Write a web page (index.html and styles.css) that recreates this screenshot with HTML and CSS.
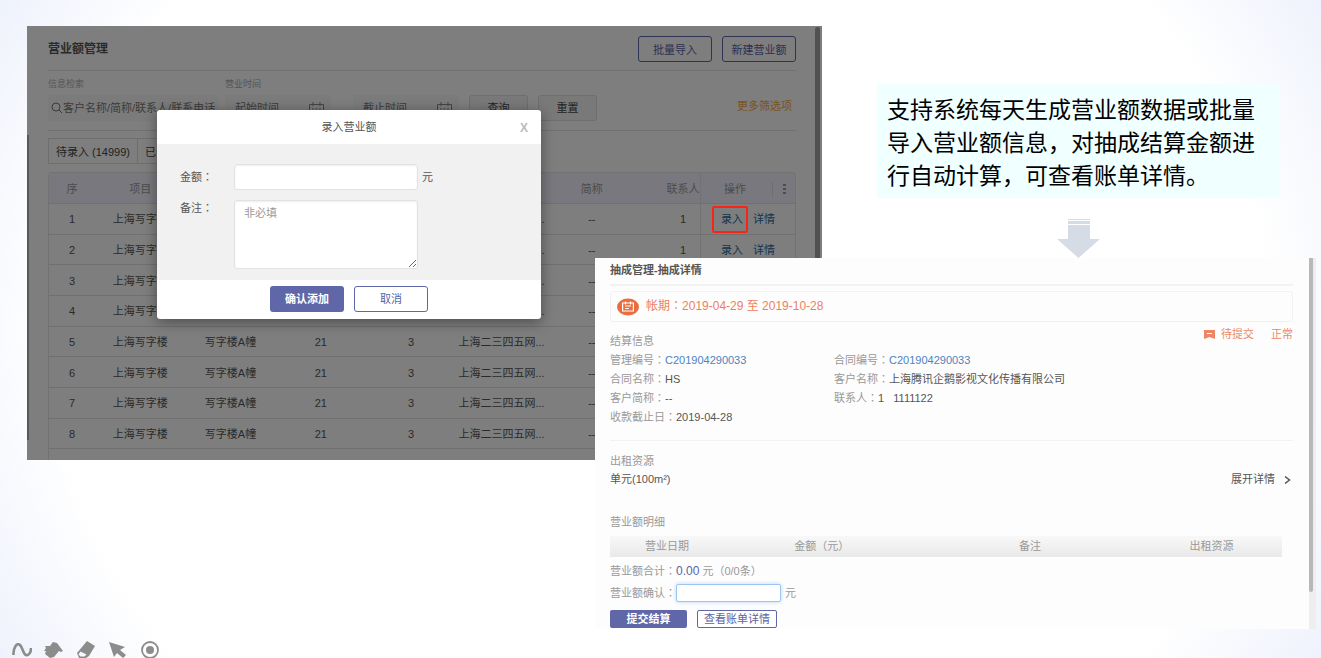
FILE: index.html
```html
<!DOCTYPE html>
<html lang="zh-CN">
<head>
<meta charset="utf-8">
<title>营业额管理</title>
<link rel="stylesheet" href="styles.css">
</head>
<body>
<main class="slide">
  <section class="list">
    <header class="list-head">
      <h1>营业额管理</h1>
      <div class="head-buttons">
        <button class="btn outline">批量导入</button>
        <button class="btn outline">新建营业额</button>
      </div>
    </header>
    <div class="filters">
      <div class="field">
        <label for="kw">信息检索</label>
        <div class="search">
          <svg width="12" height="12" viewBox="0 0 12 12"><circle cx="5" cy="5" r="4" fill="none" stroke="#777"/><path d="M8 8l3 3" stroke="#777"/></svg>
          <input id="kw" type="text" placeholder="客户名称/简称/联系人/联系电话">
        </div>
      </div>
      <div class="field dates">
        <label for="from">营业时间</label>
        <div class="date-row">
          <div class="date"><input id="from" type="text" placeholder="起始时间"><svg width="15" height="12" viewBox="0 0 15 12" fill="none" stroke="#888"><path d="M.5 2.500h14v9H.5zM4 0v4M11 0v4M3 7h2M6.500 7h2M10 7h2"/></svg></div>
          <div class="date"><input type="text" placeholder="截止时间" aria-label="截止时间"><svg width="15" height="12" viewBox="0 0 15 12" fill="none" stroke="#888"><path d="M.5 2.500h14v9H.5zM4 0v4M11 0v4M3 7h2M6.500 7h2M10 7h2"/></svg></div>
        </div>
      </div>
      <button class="btn soft">查询</button>
      <button class="btn soft">重置</button>
      <a class="more" href="#">更多筛选项</a>
    </div>
    <div class="tabs"><button>待录入 (14999)</button><button>已录入</button></div>
    <table class="grid">
      <colgroup><col class="c-no"><col class="c-mid"><col class="c-mid"><col class="c-mid"><col class="c-mid"><col class="c-mid"><col class="c-mid"><col class="c-person"><col class="c-op"></colgroup>
      <thead><tr><th>序</th><th>项目</th><th></th><th></th><th></th><th></th><th>简称</th><th class="person">联系人</th><th class="op"><span class="op-head"><span>操作</span><span class="dots"><svg width="3" height="11" viewBox="0 0 3 11" fill="#999"><path d="M0 0h3v2H0zM0 4h3v2H0zM0 8h3v2H0z"/></svg></span></span></th></tr></thead>
      <tbody>
        <tr><td>1</td><td>上海写字楼</td><td>写字楼A幢</td><td>21</td><td>3</td><td>上海二三四五网...</td><td>--</td><td class="person">1</td><td class="op"><a href="#">录入</a><a href="#">详情</a></td></tr>
        <tr><td>2</td><td>上海写字楼</td><td>写字楼A幢</td><td>21</td><td>3</td><td>上海二三四五网...</td><td>--</td><td class="person">1</td><td class="op"><a href="#">录入</a><a href="#">详情</a></td></tr>
        <tr><td>3</td><td>上海写字楼</td><td>写字楼A幢</td><td>21</td><td>3</td><td>上海二三四五网...</td><td>--</td><td class="person"></td><td class="op"></td></tr>
        <tr><td>4</td><td>上海写字楼</td><td></td><td></td><td></td><td>上海二三四五网...</td><td>--</td><td class="person"></td><td class="op"></td></tr>
        <tr><td>5</td><td>上海写字楼</td><td>写字楼A幢</td><td>21</td><td>3</td><td>上海二三四五网...</td><td>--</td><td class="person"></td><td class="op"></td></tr>
        <tr><td>6</td><td>上海写字楼</td><td>写字楼A幢</td><td>21</td><td>3</td><td>上海二三四五网...</td><td>--</td><td class="person"></td><td class="op"></td></tr>
        <tr><td>7</td><td>上海写字楼</td><td>写字楼A幢</td><td>21</td><td>3</td><td>上海二三四五网...</td><td>--</td><td class="person"></td><td class="op"></td></tr>
        <tr><td>8</td><td>上海写字楼</td><td>写字楼A幢</td><td>21</td><td>3</td><td>上海二三四五网...</td><td>--</td><td class="person"></td><td class="op"></td></tr>
        <tr><td>&nbsp;</td><td></td><td></td><td></td><td></td><td></td><td></td><td class="person"></td><td class="op"></td></tr>
      </tbody>
    </table>
    <div class="list-scroll"></div>
    <div class="list-edge"></div>
    <div class="mask"></div>
    <div class="highlight"></div>
    <form class="modal" role="dialog" aria-labelledby="modal-title">
      <header class="modal-head"><h2 id="modal-title">录入营业额</h2><button type="button" class="close" aria-label="关闭">X</button></header>
      <div class="modal-body">
        <label for="amount">金额<span class="p" lang="zh-TW">：</span></label>
        <div class="amount"><input id="amount" type="text"><span>元</span></div>
        <label for="memo">备注<span class="p" lang="zh-TW">：</span></label>
        <textarea id="memo" placeholder="非必填"></textarea>
      </div>
      <footer class="modal-foot">
        <button type="button" class="btn primary">确认添加</button>
        <button type="button" class="btn outline">取消</button>
      </footer>
    </form>
  </section>

  <aside class="aside">
    <p class="note">支持系统每天生成营业额数据或批量导入营业额信息，对抽成结算金额进行自动计算，可查看账单详情。</p>
    <svg class="arrow" width="43" height="39" viewBox="0 0 43 39" fill="#d6dce5"><path d="M11 0h22v1H11zM11 2h22v3H11zM11 6h22v14h10L21.500 39 0 20h11z"/></svg>
  </aside>

  <section class="detail">
    <div class="detail-main">
      <h2>抽成管理-抽成详情</h2>
      <div class="period">
        <svg width="22" height="18" viewBox="0 0 22 18"><ellipse cx="11" cy="9" rx="11" ry="8.500" fill="#ea6d3d"/><g fill="none" stroke="#fff" stroke-width="1.200"><path d="M5.600 5h10.800v8H5.600zM8.500 3.500v3M13.500 3.500v3M8 8h6M8 10.500h4"/></g></svg>
        <span>帐期<span class="p" lang="zh-TW">：</span>2019-04-29 至 2019-10-28</span>
      </div>
      <div class="settle">
        <h3>结算信息</h3>
        <div class="status"><svg width="11" height="9" viewBox="0 0 11 9"><path d="M0 0h11v9L5.500 7 0 9z" fill="#ee8564"/><path d="M3 3.500h5" stroke="#fff"/></svg><span>待提交</span><span class="normal">正常</span></div>
      </div>
      <div class="info">
        <div>管理编号<span class="p" lang="zh-TW">：</span><a href="#">C201904290033</a></div>
        <div>合同编号<span class="p" lang="zh-TW">：</span><a href="#">C201904290033</a></div>
        <div>合同名称<span class="p" lang="zh-TW">：</span><b>HS</b></div>
        <div>客户名称<span class="p" lang="zh-TW">：</span><b>上海腾讯企鹅影视文化传播有限公司</b></div>
        <div>客户简称<span class="p" lang="zh-TW">：</span><b>--</b></div>
        <div>联系人<span class="p" lang="zh-TW">：</span><b>1 &nbsp; 1111122</b></div>
        <div>收款截止日<span class="p" lang="zh-TW">：</span><b>2019-04-28</b></div>
      </div>
      <h3 class="rent">出租资源</h3>
      <div class="unit"><span>单元(100m²)</span><a href="#">展开详情<svg width="7" height="8" viewBox="0 0 7 8"><path d="M1 .5l4.500 3.500L1 7.500" fill="none" stroke="#555" stroke-width="1.500"/></svg></a></div>
      <h3 class="lines">营业额明细</h3>
      <table class="bills"><colgroup><col class="b1"><col class="b2"><col class="b3"><col class="b4"></colgroup>
        <thead><tr><th>营业日期</th><th>金额<span class="p" lang="zh-TW">（</span>元<span class="p" lang="zh-TW">）</span></th><th>备注</th><th>出租资源</th></tr></thead></table>
      <div class="sum">营业额合计<span class="p" lang="zh-TW">：</span><strong>0.00</strong> 元<span class="p" lang="zh-TW">（</span>0/0条<span class="p" lang="zh-TW">）</span></div>
      <div class="confirm"><label for="sure">营业额确认<span class="p" lang="zh-TW">：</span></label><input id="sure" type="text"><span>元</span></div>
      <div class="actions"><button class="btn small primary">提交结算</button><button class="btn small outline">查看账单详情</button></div>
    </div>
    <div class="detail-scroll"><div class="thumb"></div></div>
  </section>

  <nav class="tools" aria-label="放映工具">
    <svg viewBox="0 0 20 18"><path d="M1.500 14C1 7 5 1 8 4s3 9 6 10 5-3 5-7" fill="none" stroke="#8c8c8c" stroke-width="2.600"/></svg>
    <svg viewBox="0 0 20 18"><path d="M1 5l5 0 3-4 4 1 6 8-2 1-2-1-5 6-4 1-5-4 1-3-2 0 2-3z" fill="#8c8c8c"/></svg>
    <svg viewBox="0 0 20 18"><path d="M11 0l8 5-6 10-3 2H3l-2-5z" fill="#8c8c8c"/><path d="M4.500 10.500l6 3-2 2H4.500l-2-2z" fill="#f8faff"/></svg>
    <svg viewBox="0 0 20 18"><path d="M1 1l16 5-5 3 6 5-3 3-6-5-3 4z" fill="#8c8c8c"/></svg>
    <svg viewBox="0 0 20 18"><circle cx="10" cy="9" r="8" fill="none" stroke="#8c8c8c" stroke-width="1.800"/><circle cx="10" cy="9" r="4" fill="#8c8c8c"/></svg>
  </nav>
</main>
</body>
</html>
```

FILE: styles.css
```css
* { box-sizing: border-box; }
body, h1, h2, h3, p { margin: 0; }
body, button, input, textarea {
  font-family: "Liberation Sans", "Noto Sans CJK SC", sans-serif;
  font-size: 11px;
}
body { color: #555; line-height: 15px; }
a { color: inherit; text-decoration: none; }
button, input, textarea { margin: 0; padding: 0; border: 0; color: inherit; }
svg { display: block; flex: none; }
.p { font-family: "Liberation Sans", "Noto Sans CJK TC", sans-serif; }

.slide {
  display: grid;
  grid-template-columns: 27fr 568fr 227fr 55fr 403fr 29fr 12fr;
  grid-template-rows: minmax(0, 26fr) minmax(0, 232fr) minmax(0, 202fr) minmax(0, 169fr) minmax(0, 29fr);
  height: 100vh;
  overflow: hidden;
  background: radial-gradient(ellipse 62% 110% at 50% 50%, #fff 74%, #e8edfb 100%);
}

.btn { height: 26px; min-width: 74px; border-radius: 3px; line-height: 15px; }
.btn.outline { border: 1px solid #5f67a8; background: #fff; color: #5b63a3; }
.btn.primary { background: #5f67a8; color: #fff; font-weight: bold; }
.btn.soft { min-width: 59px; border: 1px solid #ddd; background: #f3f3f3; color: #444; }
.btn.small { height: 18px; border-radius: 2px; }

/* revenue list */
.list {
  grid-area: 2 / 2 / 4 / 4;
  position: relative;
  overflow: hidden;
  padding: 0 26px 0 21px;
  background: #fdfdfd;
}
.list-head {
  display: flex;
  justify-content: space-between;
  align-items: center;
  height: 45px;
  border-bottom: 1px solid #e2e2e2;
}
.list-head h1 { padding-top: 2px; font-size: 12px; }
.head-buttons { display: flex; gap: 10px; padding-top: 2px; }
.head-buttons .outline { background: transparent; }
.head-buttons .btn { padding-top: 2px; }
.filters {
  display: flex;
  align-items: flex-end;
  gap: 10px;
  height: 60px;
  padding-bottom: 9px;
  border-bottom: 1px solid #e2e2e2;
}
.field { width: 170px; }
.field.dates { width: 234px; margin-left: -3px; }
.field label { display: block; margin-bottom: 5px; font-size: 9px; line-height: 12px; color: #aaa; }
.search, .date { display: flex; align-items: center; height: 26px; background: #f6f6f6; }
.search { padding-left: 3px; }
.search input, .date input { flex: 1; width: 0; background: transparent; }
.search input::placeholder, .date input::placeholder { color: #777; }
.date-row { display: flex; gap: 22px; }
.date { flex: 1; padding: 0 7px 0 10px; }
.more { margin-left: auto; padding: 0 4px 7px 0; color: #f3a73c; }
.tabs { display: flex; height: 26px; margin: 7px 0 8px; }
.tabs button { padding: 0 7px; border: 1px solid #ddd; background: transparent; color: #444; }
.tabs button + button { margin-left: -1px; }

.grid {
  width: 100%;
  height: 309px;
  table-layout: fixed;
  border: 1px solid #e4e4e4;
  border-collapse: separate;
  border-spacing: 0;
  border-radius: 3px 3px 0 0;
}
.grid th, .grid td { padding: 2px 0 0; text-align: center; white-space: nowrap; border-bottom: 1px solid #e0e0e0; }
.grid th { height: 31px; background: #f0f0fc; color: #999; font-weight: normal; }
.c-no { width: 46px; }
.c-person { width: 63px; }
.c-op { width: 95px; }
.grid .person { padding-left: 29px; }
.grid .op { text-align: left; padding-left: 20px; border-left: 1px solid #e4e4e4; color: #286a9d; }
.grid th.op { color: #999; }
.grid .op a { margin-right: 10px; }
.op-head { display: flex; justify-content: space-between; padding-left: 3px; }
.dots { display: flex; align-items: center; justify-content: center; width: 23px; border-left: 1px solid #ddd; }
.list-scroll { position: absolute; top: 1px; right: 2px; bottom: 0; width: 5px; border-radius: 3px; background: #a3a3a3; }
.list-edge { position: absolute; left: 0; top: 109px; bottom: 20px; width: 2px; background: #b0b0b0; }
.mask { position: absolute; inset: 0; background: rgba(0, 0, 0, .5); }
.highlight { position: absolute; right: 74px; top: 180px; width: 36px; height: 27px; border: 2px solid #fa2416; border-radius: 2px; }

/* dialog */
.modal {
  position: absolute;
  left: 130px;
  top: 84px;
  width: 384px;
  border-radius: 3px;
  overflow: hidden;
  background: #fff;
  box-shadow: 0 3px 14px rgba(0, 0, 0, .4);
}
.modal-head { position: relative; padding: 10px 0 9px; text-align: center; }
.modal-head h2 { font-size: 11px; font-weight: normal; }
.close { position: absolute; top: 11px; right: 13px; background: none; color: #bbb; font-size: 12px; font-weight: bold; }
.modal-body {
  display: grid;
  grid-template-columns: 54px 1fr;
  row-gap: 10px;
  padding: 20px 23px 11px;
  background: #f1f1f1;
}
.modal-body > label { padding-top: 6px; }
.modal-body label[for="memo"] { padding-top: 1px; }
.amount { display: flex; align-items: center; gap: 4px; }
.amount input, .modal-body textarea { width: 184px; border: 1px solid #e2e2e2; border-radius: 3px; background: #fff; box-shadow: inset 0 1px 2px #eee; }
.amount input { height: 26px; }
.modal-body textarea { display: block; height: 69px; padding: 5px 9px; line-height: 15px; resize: both; }
.modal-body textarea::placeholder { color: #999; }
.modal-foot { display: flex; justify-content: center; gap: 10px; padding: 6px 0 7px; }

/* note */
.aside { grid-area: 1 / 5 / 3 / 6; display: flex; flex-direction: column; align-items: center; justify-content: flex-end; }
.note { padding: 10px 10px 5px; background: #f0ffff; color: #000; font-size: 23px; line-height: 33px; }
.arrow { margin-top: 21px; }

/* settlement detail */
.detail { grid-area: 3 / 3 / 5 / 8; z-index: 1; display: flex; margin-right: 5px; }
.detail-main { flex: 1; padding: 5px 16px 0 15px; background: #fdfdfe; color: #999; }
.detail-main h2 { padding-bottom: 6px; border-bottom: 2px solid #f2f2f2; font-size: 11px; color: #555; }
.period {
  display: flex;
  align-items: center;
  gap: 7px;
  height: 31px;
  margin-top: 5px;
  padding-left: 6px;
  border: 1px solid #f2f2f3;
  border-radius: 3px;
  color: #ee7f5c;
  font-size: 12px;
}
.detail-main h3 { font-size: 11px; font-weight: normal; color: #999; }
.settle { display: flex; justify-content: space-between; padding-top: 5px; }
.settle h3 { padding-top: 7px; }
.status { display: flex; align-items: center; gap: 6px; height: 15px; color: #ee8564; }
.normal { margin-left: 11px; }
.info {
  display: grid;
  grid-template-columns: 224px 1fr;
  line-height: 19px;
  padding: 2px 0 13px;
  border-bottom: 1px solid #f2f2f2;
}
.info a { color: #4b83bd; }
.info b { color: #555; font-weight: normal; }
.detail-main .rent { padding-top: 13px; }
.unit { display: flex; justify-content: space-between; padding: 3px 2px 0 0; color: #555; }
.unit a { display: flex; align-items: center; gap: 9px; }
.detail-main .lines { padding: 28px 0 6px; }
.bills { width: calc(100% - 11px); border-spacing: 0; table-layout: fixed; background: linear-gradient(#f8f8f8, #e9e9e9); }
.bills th { height: 21px; padding: 0; font-weight: normal; }
.b1 { width: 17%; }
.b2 { width: 29%; }
.b3 { width: 33%; }
.b4 { width: 21%; }
.sum { padding: 7px 0 5px; }
.sum strong { font-size: 12px; font-weight: normal; color: #5b63a3; }
.confirm { display: flex; align-items: center; }
.confirm input { width: 105px; height: 18px; margin-right: 4px; border: 1px solid #9cc4ee; border-radius: 2px; background: #fff; box-shadow: 0 0 4px #b9d9f5; }
.actions { display: flex; gap: 10px; padding-top: 8px; }
.actions .btn { min-width: 77px; padding: 0 6px; }
.detail-scroll { width: 7px; background: #eee; }
.thumb { width: 4px; height: 90%; background: #b8b8b8; border-radius: 0 0 2px 2px; }

.tools { grid-area: 5 / 1 / 6 / 4; display: flex; gap: 12px; padding: 12px 0 0 12px; }
.tools svg { width: 20px; height: 18px; }
```
